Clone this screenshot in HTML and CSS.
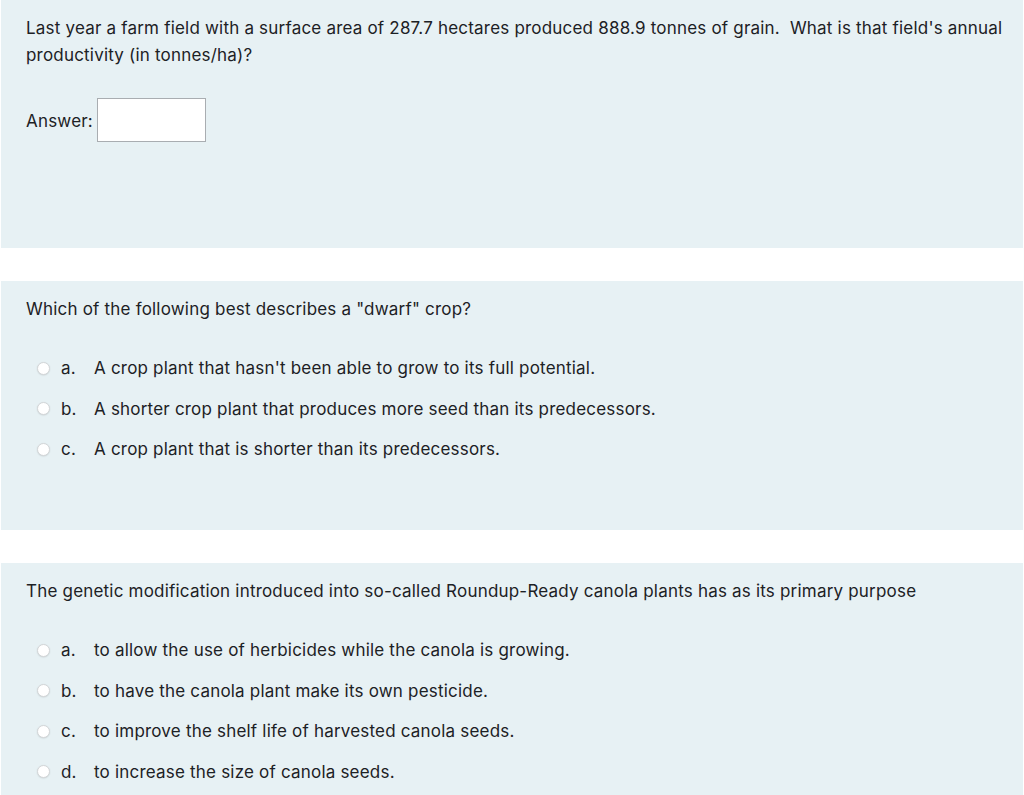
FILE: index.html
```html
<!DOCTYPE html>
<html lang="en">
<head>
<meta charset="utf-8">
<title>Quiz</title>
<link rel="stylesheet" href="styles.css">
</head>
<body>
<div class="quiz">
  <section class="question q-short">
    <p class="qtext">Last year a farm field with a surface area of 287.7 hectares produced 888.9 tonnes of grain.&nbsp; What is that field's annual productivity (in tonnes/ha)?</p>
    <div class="answer-row">
      <label class="answer-label" for="ans1">Answer:</label>
      <input class="answer-input" id="ans1" type="text">
    </div>
  </section>

  <section class="question q-choice q2">
    <p class="qtext">Which of the following best describes a "dwarf" crop?</p>
    <div class="options">
      <div class="option"><span class="radio"></span><span class="letter">a.</span><span class="otext">A crop plant that hasn't been able to grow to its full potential.</span></div>
      <div class="option"><span class="radio"></span><span class="letter">b.</span><span class="otext">A shorter crop plant that produces more seed than its predecessors.</span></div>
      <div class="option"><span class="radio"></span><span class="letter">c.</span><span class="otext">A crop plant that is shorter than its predecessors.</span></div>
    </div>
  </section>

  <section class="question q-choice q3">
    <p class="qtext">The genetic modification introduced into so-called Roundup-Ready canola plants has as its primary purpose</p>
    <div class="options">
      <div class="option"><span class="radio"></span><span class="letter">a.</span><span class="otext">to allow the use of herbicides while the canola is growing.</span></div>
      <div class="option"><span class="radio"></span><span class="letter">b.</span><span class="otext">to have the canola plant make its own pesticide.</span></div>
      <div class="option"><span class="radio"></span><span class="letter">c.</span><span class="otext">to improve the shelf life of harvested canola seeds.</span></div>
      <div class="option"><span class="radio"></span><span class="letter">d.</span><span class="otext">to increase the size of canola seeds.</span></div>
    </div>
  </section>
</div>
</body>
</html>
```

FILE: styles.css
```css
html, body {
  margin: 0;
  padding: 0;
  background: #ffffff;
}

body {
  font-family: Inter, "Noto Sans", "Liberation Sans", sans-serif;
  font-size: 17px;
  letter-spacing: 0.2px;
  color: #1d2125;
  overflow: hidden;
}

.quiz {
  display: flex;
  flex-direction: column;
  gap: 33px;
  padding: 0 1px;
}

.question {
  background: #e7f1f4;
  padding: 15px 10px 0 25px;
  box-sizing: border-box;
}

.qtext {
  margin: 0;
  line-height: 27px;
}

.q-short {
  height: 248px;
}

.answer-row {
  display: flex;
  align-items: center;
  gap: 4px;
  margin-top: 29px;
}

.answer-label {
  padding-top: 2px;
}

.answer-input {
  width: 109px;
  height: 44px;
  box-sizing: border-box;
  border: 1px solid #a9adb1;
  background: #ffffff;
  margin: 0;
  padding: 0;
}

.q2 {
  height: 249px;
}

.q3 {
  height: 240px;
}

.options {
  margin-top: 25px;
  display: flex;
  flex-direction: column;
}

.option {
  display: flex;
  align-items: center;
  height: 40.5px;
}

.radio {
  width: 13px;
  height: 13px;
  box-sizing: border-box;
  border-radius: 50%;
  background: #ffffff;
  border: 1px solid #d3d6d8;
  box-shadow: 0 0.5px 1.5px rgba(0, 0, 0, 0.12);
  margin-left: 11px;
  margin-right: 11px;
  flex: none;
}

.letter {
  width: 33px;
  flex: none;
}
```
